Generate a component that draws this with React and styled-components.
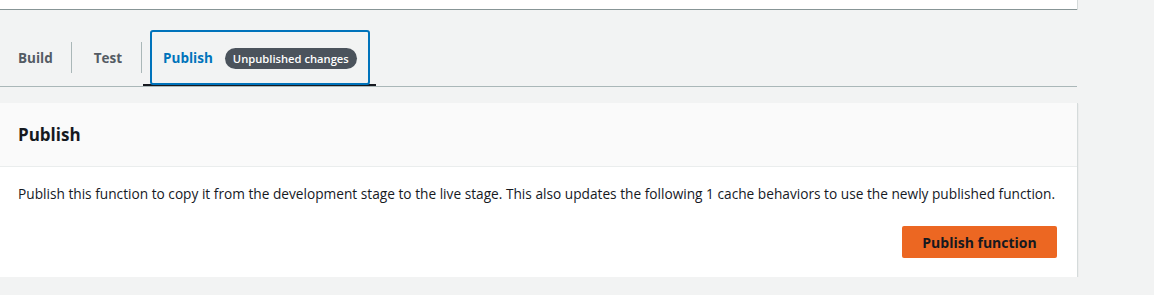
import React from 'react'
import styled, { createGlobalStyle } from 'styled-components'

const GlobalStyle = createGlobalStyle`
  html, body {
    margin: 0;
    padding: 0;
    background: #f2f3f3;
    font-family: "Open Sans", "Noto Sans", sans-serif;
    color: #16191f;
  }
`

const Page = styled.div`
  width: 1077px;
  display: flex;
  flex-direction: column;
`

const TopCard = styled.div`
  height: 9px;
  background: #ffffff;
  border-bottom: 1px solid #879596;
  box-shadow: 1px 0 0 0 #d5dbdb;
`

const TabStrip = styled.div`
  display: flex;
  align-items: stretch;
  margin-top: 20px;
  height: 56px;
  border-bottom: 1px solid #aab7b8;
`

const Tab = styled.div`
  position: relative;
  display: flex;
  align-items: center;
  gap: 12px;
  padding: ${p => (p.first ? '0 19px 0 18px' : p.active ? '0 19px 0 21px' : '0 20px 0 22px')};
  font-size: 13.5px;
  font-weight: 700;
  color: ${p => (p.active ? '#0073bb' : '#545b64')};

  ${p => !p.first && `
    &::before {
      content: '';
      position: absolute;
      left: -1px;
      top: 12px;
      height: 31px;
      width: 1px;
      background: #aab7b8;
    }
  `}

  ${p => p.active && `
    &::after {
      content: '';
      position: absolute;
      left: 1px;
      right: 0;
      bottom: 0;
      height: 2px;
      background: #16191f;
    }
  `}
`

const FocusRing = styled.span`
  position: absolute;
  left: 8px;
  right: 6px;
  top: 0;
  bottom: 1px;
  border: 2px solid #0073bb;
  border-radius: 3px;
  z-index: 1;
  pointer-events: none;
`

const Badge = styled.span`
  display: inline-flex;
  align-items: center;
  height: 21px;
  padding: 0 8px;
  border-radius: 11px;
  background: #4b535c;
  color: #ffffff;
  font-size: 11.2px;
  font-weight: 600;
`

const Card = styled.section`
  margin-top: 16px;
  background: #ffffff;
  box-shadow: 0 1px 0 0 #aab7b8, 1px 0 0 0 #d5dbdb, 1px 1px 1px 0 rgba(0, 28, 36, 0.15);
`

const CardHeader = styled.div`
  background: #fafafa;
  border-bottom: 1px solid #eaeded;
  padding: 0 20px 0 18px;
  height: 63px;
  display: flex;
  align-items: center;
`

const Title = styled.h2`
  margin: 0;
  font-size: 17px;
  font-weight: 700;
  color: #16191f;
`

const CardBody = styled.div`
  padding: 17px 20px 19px 18px;
  display: flex;
  flex-direction: column;
`

const Text = styled.p`
  margin: 0;
  font-size: 13.7px;
  line-height: 20px;
  white-space: nowrap;
`

const Actions = styled.div`
  display: flex;
  justify-content: flex-end;
  margin-top: 22px;
`

const PrimaryButton = styled.button`
  width: 155px;
  height: 32px;
  border: none;
  border-radius: 2px;
  background: #ec6722;
  color: #16191f;
  font-family: inherit;
  font-size: 14px;
  font-weight: 700;
  cursor: pointer;
`

const App = () => (
  <>
    <GlobalStyle />
    <Page>
      <TopCard />
      <TabStrip>
        <Tab first>Build</Tab>
        <Tab>Test</Tab>
        <Tab active>
          <FocusRing />
          Publish
          <Badge>Unpublished changes</Badge>
        </Tab>
      </TabStrip>
      <Card>
        <CardHeader>
          <Title>Publish</Title>
        </CardHeader>
        <CardBody>
          <Text>
            Publish this function to copy it from the development stage to the live stage. This also updates the following 1 cache behaviors to use the newly published function.
          </Text>
          <Actions>
            <PrimaryButton>Publish function</PrimaryButton>
          </Actions>
        </CardBody>
      </Card>
    </Page>
  </>
)

export default App
